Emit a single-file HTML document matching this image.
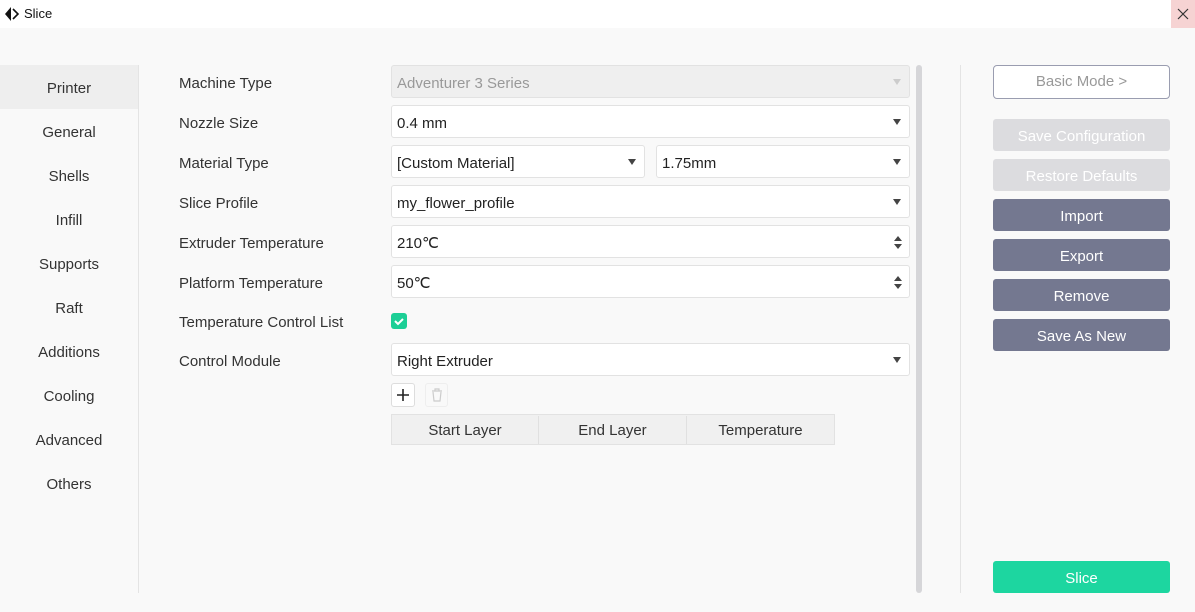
<!DOCTYPE html>
<html><head><meta charset="utf-8"><style>
*{box-sizing:border-box;margin:0;padding:0}
body{width:1195px;height:612px;overflow:hidden;background:#f9f9f9;font-family:"Liberation Sans",sans-serif;color:#333;position:relative}
.a{position:absolute}
.title{left:0;top:0;width:1195px;height:28px;background:#fff}
.nav{left:0;width:138px;height:44px;text-align:center;line-height:44px;padding-top:2px;font-size:15px;color:#333}
.lbl{left:179px;font-size:15px;color:#333;line-height:33px;height:33px;padding-top:1px}
.inp{height:33px;background:#fff;border:1px solid #e2e2e2;border-radius:3px;font-size:15px;line-height:31px;padding-top:2px;padding-left:5px;color:#222}
.arr{position:absolute;right:8px;top:13px;width:0;height:0;border-left:4px solid transparent;border-right:4px solid transparent;border-top:6px solid #444}
.btn{left:993px;width:177px;height:32px;border-radius:3px;text-align:center;line-height:32px;padding-top:2px;font-size:15px;color:#fff}
</style></head><body>
<div class="a title"></div>
<svg class="a" style="left:4px;top:6px" width="16" height="16" viewBox="0 0 16 16"><path d="M7 1L1 8l6 7V1z" fill="#111"/><path d="M9 3l5 5-5 5" fill="none" stroke="#111" stroke-width="1.6"/></svg>
<div class="a" style="left:24px;top:6px;font-size:13px;color:#111">Slice</div>
<div class="a" style="left:1171px;top:0;width:24px;height:28px;background:#f6d3d3"></div>
<svg class="a" style="left:1177px;top:8px" width="12" height="12"><path d="M1 1L11 11M11 1L1 11" stroke="#333" stroke-width="1.2"/></svg>

<div class="a" style="left:138px;top:65px;width:1px;height:528px;background:#e4e4e4"></div>
<div class="a nav" style="top:65px;background:#eeeeee">Printer</div>
<div class="a nav" style="top:109px">General</div>
<div class="a nav" style="top:153px">Shells</div>
<div class="a nav" style="top:197px">Infill</div>
<div class="a nav" style="top:241px">Supports</div>
<div class="a nav" style="top:285px">Raft</div>
<div class="a nav" style="top:329px">Additions</div>
<div class="a nav" style="top:373px">Cooling</div>
<div class="a nav" style="top:417px">Advanced</div>
<div class="a nav" style="top:461px">Others</div>

<div class="a lbl" style="top:66px">Machine Type</div>
<div class="a lbl" style="top:106px">Nozzle Size</div>
<div class="a lbl" style="top:146px">Material Type</div>
<div class="a lbl" style="top:186px">Slice Profile</div>
<div class="a lbl" style="top:226px">Extruder Temperature</div>
<div class="a lbl" style="top:266px">Platform Temperature</div>
<div class="a lbl" style="top:305px">Temperature Control List</div>
<div class="a lbl" style="top:344px">Control Module</div>

<div class="a inp" style="left:391px;top:65px;width:519px;background:#efefef;color:#999">Adventurer 3 Series<span class="arr" style="border-top-color:#ccc"></span></div>
<div class="a inp" style="left:391px;top:105px;width:519px">0.4 mm<span class="arr"></span></div>
<div class="a inp" style="left:391px;top:145px;width:254px">[Custom Material]<span class="arr"></span></div>
<div class="a inp" style="left:656px;top:145px;width:254px">1.75mm<span class="arr"></span></div>
<div class="a inp" style="left:391px;top:185px;width:519px">my_flower_profile<span class="arr"></span></div>
<div class="a inp" style="left:391px;top:225px;width:519px">210℃<svg style="position:absolute;right:7px;top:10px" width="8" height="13"><path d="M0 5L4 0 8 5zM0 8L4 13 8 8z" fill="#444"/></svg></div>
<div class="a inp" style="left:391px;top:265px;width:519px">50℃<svg style="position:absolute;right:7px;top:10px" width="8" height="13"><path d="M0 5L4 0 8 5zM0 8L4 13 8 8z" fill="#444"/></svg></div>
<div class="a" style="left:391px;top:313px;width:16px;height:16px;background:#1ccf96;border-radius:3px"><svg width="16" height="16"><path d="M4 8l3 3 5-5" fill="none" stroke="#fff" stroke-width="2"/></svg></div>
<div class="a inp" style="left:391px;top:343px;width:519px">Right Extruder<span class="arr"></span></div>
<div class="a" style="left:391px;top:383px;width:24px;height:24px;background:#fff;border:1px solid #ddd;border-radius:3px"><svg width="22" height="22"><path d="M11 5v12M5 11h12" stroke="#222" stroke-width="1.6"/></svg></div>
<div class="a" style="left:425px;top:383px;width:23px;height:24px;border:1px solid #eee;border-radius:3px"><svg width="21" height="22"><path d="M6 7h10M9 7V5h4v2M7 8l1 9h6l1-9" fill="none" stroke="#ccc" stroke-width="1.2"/></svg></div>
<div class="a" style="left:391px;top:414px;width:444px;height:31px;background:#f0f0f0;border:1px solid #e2e2e2;display:flex;font-size:15px;line-height:29px;padding-top:1px;color:#333">
<div style="width:147px;text-align:center;border-right:1px solid #e0e0e0">Start Layer</div>
<div style="width:148px;text-align:center;border-right:1px solid #e0e0e0">End Layer</div>
<div style="width:147px;text-align:center">Temperature</div></div>

<div class="a" style="left:916px;top:65px;width:6px;height:528px;background:#d6d6d9;border-radius:3px"></div>
<div class="a" style="left:960px;top:65px;width:1px;height:528px;background:#e4e4e4"></div>

<div class="a btn" style="top:65px;height:34px;border:1px solid #9a9db0;border-radius:4px;background:#fff;color:#999;line-height:32px;padding-top:0">Basic Mode &gt;</div>
<div class="a btn" style="top:119px;background:#dcdcdf">Save Configuration</div>
<div class="a btn" style="top:159px;background:#dcdcdf">Restore Defaults</div>
<div class="a btn" style="top:199px;background:#747890">Import</div>
<div class="a btn" style="top:239px;background:#747890">Export</div>
<div class="a btn" style="top:279px;background:#747890">Remove</div>
<div class="a btn" style="top:319px;background:#747890">Save As New</div>
<div class="a btn" style="top:561px;background:#1dd6a0">Slice</div>
</body></html>
